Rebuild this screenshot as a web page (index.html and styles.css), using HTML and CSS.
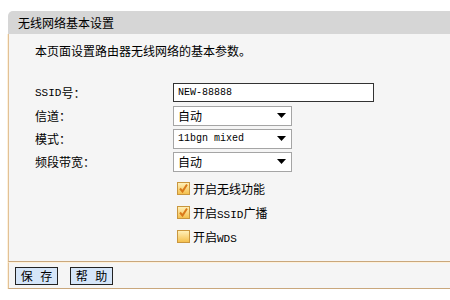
FILE: index.html
```html
<!DOCTYPE html>
<html lang="zh-CN">
<head>
    <meta charset="UTF-8">
    <title>无线网络基本设置</title>
    <link rel="stylesheet" href="styles.css">
</head>
<body>

    <div class="panel">
        <div class="panel-title">无线网络基本设置</div>

        <div class="panel-body">
            <p class="intro">本页面设置路由器无线网络的基本参数。</p>

            <!-- Basic settings -->
            <div class="form-grid">
                <label class="form-label"><span class="latin">SSID</span>号：</label>
                <div class="form-field">
                    <input class="text-input" type="text" value="NEW-88888">
                </div>

                <label class="form-label">信道：</label>
                <div class="form-field">
                    <div class="fake-select"><span>自动</span><svg width="9" height="5" viewBox="0 0 9 5"><path d="M0 0H9L4.5 5Z" fill="#000"/></svg></div>
                </div>

                <label class="form-label">模式：</label>
                <div class="form-field">
                    <div class="fake-select"><span class="latin">11bgn mixed</span><svg width="9" height="5" viewBox="0 0 9 5"><path d="M0 0H9L4.5 5Z" fill="#000"/></svg></div>
                </div>

                <label class="form-label">频段带宽：</label>
                <div class="form-field">
                    <div class="fake-select"><span>自动</span><svg width="9" height="5" viewBox="0 0 9 5"><path d="M0 0H9L4.5 5Z" fill="#000"/></svg></div>
                </div>
            </div>

            <!-- Switches -->
            <div class="check-list">
                <div class="check-row">
                    <span class="check-box"><svg width="11" height="11" viewBox="0 0 11 11"><path d="M2 5.5L4.5 8.5L9 1.5" fill="none" stroke="#d9791a" stroke-width="2"/></svg></span>
                    <span>开启无线功能</span>
                </div>
                <div class="check-row">
                    <span class="check-box"><svg width="11" height="11" viewBox="0 0 11 11"><path d="M2 5.5L4.5 8.5L9 1.5" fill="none" stroke="#d9791a" stroke-width="2"/></svg></span>
                    <span>开启<span class="latin">SSID</span>广播</span>
                </div>
                <div class="check-row">
                    <span class="check-box"></span>
                    <span>开启<span class="latin">WDS</span></span>
                </div>
            </div>
        </div>

        <div class="panel-footer">
            <button class="btn">保 存</button>
            <button class="btn">帮 助</button>
        </div>
    </div>

</body>
</html>
```

FILE: styles.css
```css
body {
    margin: 0;
    background-color: #fff;
    font-family: "Noto Sans CJK SC", "Liberation Sans", sans-serif;
    font-size: 12px;
    color: #000;
    overflow: hidden;
}
.latin {
    font-family: "Liberation Mono", "Noto Sans CJK SC", monospace;
    font-size: 11px;
}
.panel {
    margin-top: 11px;
    margin-left: 8px;
    width: 460px;
}
.panel-title {
    height: 23px;
    line-height: 23px;
    padding-left: 10px;
    background-color: #d6d6d6;
    border-top-left-radius: 5px;
}
.panel-body {
    background-color: #f5f5f5;
    border-left: 1px solid #e2c196;
    box-shadow: -1px 0 0 #fff1da;
    height: 227px;
    border-bottom: 1px solid #c9a77c;
}
.intro {
    margin: 0;
    padding: 10px 0 0 26px;
    line-height: 14px;
}
.form-grid {
    display: grid;
    grid-template-columns: 138px auto;
    grid-auto-rows: 23px;
    margin-top: 23px;
    padding-left: 26px;
}
.form-label {
    display: flex;
    align-items: center;
}
.form-field {
    display: flex;
    align-items: center;
}
.text-input {
    box-sizing: border-box;
    width: 201px;
    height: 19px;
    margin: 0;
    padding: 0 4px;
    border: 1px solid #333;
    background-color: #fff;
    font-family: "Liberation Mono", monospace;
    font-size: 10px;
}
.fake-select {
    box-sizing: border-box;
    display: flex;
    align-items: center;
    justify-content: space-between;
    width: 119px;
    height: 20px;
    padding: 0 5px 0 4px;
    border: 1px solid #a5a5a5;
    background-color: #fff;
}
.fake-select .latin {
    font-size: 10px;
}
.check-list {
    margin-top: 3px;
    padding-left: 168px;
}
.check-row {
    display: flex;
    align-items: center;
    gap: 3px;
    height: 24px;
}
.check-box {
    box-sizing: border-box;
    display: flex;
    align-items: center;
    justify-content: center;
    width: 13px;
    height: 13px;
    border: 1px solid #c9963e;
    background: linear-gradient(#fff0b8, #f4c04e);
}
.panel-footer {
    display: flex;
    align-items: center;
    gap: 12px;
    height: 25px;
    padding-left: 6px;
    background-color: #f5f5f5;
    border-left: 1px solid #e2c196;
    border-top: 1px solid #fff1da;
    border-bottom: 1px solid #c9a77c;
    box-shadow: -1px 0 0 #fff1da;
}
.btn {
    box-sizing: border-box;
    width: 43px;
    height: 18px;
    margin: 0;
    padding: 0;
    border: 1px solid #222;
    background-color: #d5e5f8;
    font-family: "Noto Sans CJK SC", sans-serif;
    font-size: 12px;
    line-height: 16px;
    word-spacing: 5px;
    color: #000;
}
```
